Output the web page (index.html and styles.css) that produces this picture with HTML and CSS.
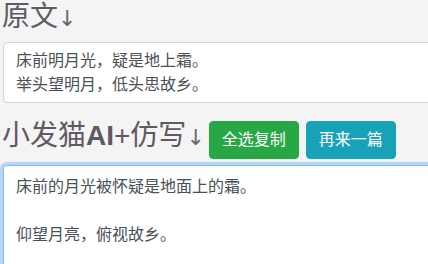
FILE: index.html
```html
<!DOCTYPE html>
<html lang="zh-CN">
<head>
<meta charset="utf-8">
<title>小发猫AI仿写</title>
<link rel="stylesheet" href="styles.css">
</head>
<body>
<div class="page">
  <h3 class="title">原文<span class="arrow">↓</span></h3>
  <div class="source">床前明月光，疑是地上霜。<br>举头望明月，低头思故乡。</div>
  <div class="row">
    <h3 class="title title-inline">小发猫<span class="ai">AI</span>+仿写<span class="arrow">↓</span></h3>
    <button class="btn btn-success">全选复制</button>
    <button class="btn btn-info">再来一篇</button>
  </div>
  <div class="result">床前的月光被怀疑是地面上的霜。

仰望月亮，俯视故乡。</div>
</div>
</body>
</html>
```

FILE: styles.css
```css
html, body {
  margin: 0;
  padding: 0;
  overflow: hidden;
  background: #f4f4f4;
}

body {
  font-family: "Liberation Sans", "Noto Sans CJK SC", sans-serif;
  color: #495057;
}

.page {
  width: 460px;
  padding-left: 3px;
}

.title {
  margin: 0 0 6px -1px;
  font-size: 28px;
  line-height: 34px;
  font-weight: normal;
  color: #5d5a62;
}

.arrow {
  font-family: "DejaVu Sans", sans-serif;
  font-size: 22px;
  color: #6a6670;
}

.ai {
  font-weight: bold;
}

.source {
  background: #fff;
  border: 1px solid #ced4da;
  border-radius: 4px;
  padding: 6px 12px 5px;
  font-size: 16px;
  line-height: 24px;
  color: #495057;
}

.row {
  display: flex;
  align-items: flex-start;
  margin-top: 18px;
  height: 38px;
}

.title-inline {
  margin: -2px 4px 0 -1px;
}

.btn {
  font-family: "Liberation Sans", "Noto Sans CJK SC", sans-serif;
  font-size: 16px;
  line-height: 24px;
  height: 38px;
  padding: 6px 12px;
  border: 1px solid transparent;
  border-radius: 4px;
  color: #fff;
  margin-right: 7px;
}

.btn-success {
  background: #28a745;
  border-color: #28a745;
}

.btn-info {
  background: #17a2b8;
  border-color: #17a2b8;
}

.result {
  margin-top: 6px;
  background: #fff;
  border: 1px solid #80bdff;
  border-radius: 4px;
  box-shadow: 0 0 0 3px rgba(0, 123, 255, 0.25);
  padding: 9px 12px 6px;
  height: 200px;
  font-size: 16px;
  line-height: 24px;
  color: #495057;
  white-space: pre-wrap;
}
```
